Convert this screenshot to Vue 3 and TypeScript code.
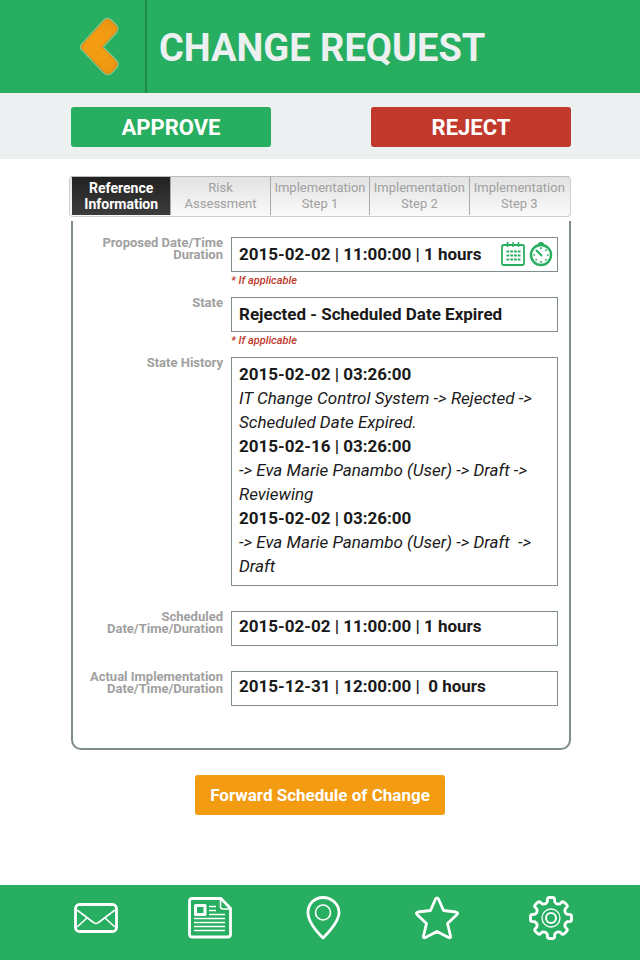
<script setup lang="ts">
import { ref } from 'vue'

interface HistoryEntry {
  date: string
  note: string
}

const tabs: [string, string][] = [
  ['Reference', 'Information'],
  ['Risk', 'Assessment'],
  ['Implementation', 'Step 1'],
  ['Implementation', 'Step 2'],
  ['Implementation', 'Step 3'],
]
const activeTab = ref(0)

const proposed = ref('2015-02-02 | 11:00:00 | 1 hours')
const state = ref('Rejected - Scheduled Date Expired')
const scheduled = ref('2015-02-02 | 11:00:00 | 1 hours')
const actual = ref('2015-12-31 | 12:00:00 |  0 hours')

const history: HistoryEntry[] = [
  { date: '2015-02-02 | 03:26:00', note: 'IT Change Control System -> Rejected ->\nScheduled Date Expired.' },
  { date: '2015-02-16 | 03:26:00', note: '-> Eva Marie Panambo (User) -> Draft ->\nReviewing' },
  { date: '2015-02-02 | 03:26:00', note: '-> Eva Marie Panambo (User) -> Draft  ->\nDraft' },
]

// Cog outline: eight flat-tipped teeth around the centre of a 44-unit box.
function cogPath(): string {
  const point = (radius: number, degrees: number): string => {
    const a = (degrees * Math.PI) / 180
    return `${(22 + radius * Math.sin(a)).toFixed(2)} ${(22 - radius * Math.cos(a)).toFixed(2)}`
  }
  let d = ''
  for (let i = 0; i < 8; i++) {
    const c = i * 45
    d += `${i ? 'L' : 'M'}${point(16.6, c - 13)}L${point(20, c - 10)}Q${point(20.6, c - 8)} ${point(20.6, c - 6)}`
    d += `L${point(20.6, c + 6)}Q${point(20.6, c + 8)} ${point(20, c + 10)}L${point(16.6, c + 13)}`
    d += `Q${point(14.2, c + 22.5)} ${point(16.6, c + 32)}`
  }
  return d + 'Z'
}
const cog = cogPath()
const dots = [0, 45, 90, 135, 180, 225, 270]
</script>

<template>
  <div class="page">
    <header class="header">
      <button class="back" type="button" aria-label="Back">
        <svg width="42" height="62" viewBox="0 0 44 64">
          <defs>
            <radialGradient id="amber" gradientUnits="userSpaceOnUse" cx="20" cy="32" r="32">
              <stop offset="0.4" stop-color="#f39c12" />
              <stop offset="1" stop-color="#ea9310" />
            </radialGradient>
          </defs>
          <path class="halo" d="M26.500 4.500Q30 1 34 5L38 9Q42 13 38 17L24 32L38 46Q42 50 38 54L34 58.500Q30 62 26 58L4 35Q1 32 4 29Z" />
          <path class="chevron" d="M26.500 4.500Q30 1 34 5L38 9Q42 13 38 17L24 32L38 46Q42 50 38 54L34 58.500Q30 62 26 58L4 35Q1 32 4 29Z" fill="url(#amber)" />
        </svg>
      </button>
      <h1>CHANGE REQUEST</h1>
    </header>

    <div class="decision">
      <button class="approve" type="button">APPROVE</button>
      <button class="reject" type="button">REJECT</button>
    </div>

    <main class="content">
      <div class="tabs" role="tablist">
        <button
          v-for="(tab, i) in tabs"
          :key="i"
          type="button"
          role="tab"
          :aria-selected="activeTab === i"
          :class="['tab', { active: activeTab === i }]"
          @click="activeTab = i"
        >
          {{ tab[0] }}<br />{{ tab[1] }}
        </button>
      </div>

      <form class="panel" @submit.prevent>
        <div class="row">
          <label for="proposed">Proposed Date/Time<br />Duration</label>
          <div class="field">
            <div class="box">
              <input id="proposed" v-model="proposed" type="text" />
              <button class="tool" type="button" aria-label="Pick date">
                <svg width="24" height="26" viewBox="0 0 24 26" fill="none" stroke="#27ae60">
                  <rect x="1" y="4" width="22" height="20" rx="1.500" stroke-width="1.800" />
                  <path d="M6.500 1v5M12 1v5M17.500 1v5" stroke-width="1.500" />
                  <path d="M5.500 10.500h14M5.500 14.500h14M5.500 18.500h14" stroke-width="2.200" stroke-dasharray="2.700 1.070" />
                </svg>
              </button>
              <button class="tool" type="button" aria-label="Pick duration">
                <svg width="24" height="26" viewBox="0 0 24 26" fill="none" stroke="#27ae60">
                  <circle cx="12" cy="14" r="10" stroke-width="2.400" />
                  <path d="M9 3.500L10.500 1.500h3L15 3.500z" fill="#27ae60" />
                  <path d="M7.500 9.500L12.500 14.500" stroke-width="2" stroke-linecap="round" />
                  <path v-for="d in dots" :key="d" d="M12 6.300v1.700" stroke-width="1.700" :transform="`rotate(${d} 12 14)`" />
                </svg>
              </button>
            </div>
            <small>* If applicable</small>
          </div>
        </div>

        <div class="row">
          <label for="state">State</label>
          <div class="field">
            <div class="box"><input id="state" v-model="state" type="text" /></div>
            <small>* If applicable</small>
          </div>
        </div>

        <div class="row">
          <span id="history-label" class="label">State History</span>
          <div class="field history" role="group" aria-labelledby="history-label">
            <template v-for="(entry, i) in history" :key="i">
              <strong>{{ entry.date }}</strong>
              <p>{{ entry.note }}</p>
            </template>
          </div>
        </div>

        <div class="row spaced">
          <label for="scheduled">Scheduled<br />Date/Time/Duration</label>
          <div class="field">
            <div class="box high"><input id="scheduled" v-model="scheduled" type="text" /></div>
          </div>
        </div>

        <div class="row spaced">
          <label for="actual">Actual Implementation<br />Date/Time/Duration</label>
          <div class="field">
            <div class="box high"><input id="actual" v-model="actual" type="text" /></div>
          </div>
        </div>
      </form>

      <button class="forward" type="button">Forward Schedule of Change</button>
    </main>

    <nav class="footer" aria-label="Main">
      <a href="#mail" aria-label="Mail">
        <svg width="44" height="44" viewBox="0 0 44 44">
          <rect x="1.500" y="8.500" width="41" height="27" rx="4" stroke-width="2.800" />
          <path d="M3 14L19.500 26.500Q22 28.500 24.500 26.500L41 14M3 31L13 22M41 31L31 22" stroke-width="1.600" />
        </svg>
      </a>
      <a href="#news" aria-label="News">
        <svg width="44" height="44" viewBox="0 0 44 44">
          <path d="M4 2.500H33L42.500 12.500V38.500Q42.500 41 39.500 41H4.500Q1.500 41 1.500 38.500V5.500Q1.500 2.500 4 2.500Z" stroke-width="2.800" />
          <path d="M32.500 3.500V10.500Q32.500 13 35 13H42" stroke-width="1.600" />
          <rect x="7.500" y="9.500" width="9.500" height="9" stroke-width="3" />
          <path d="M21 10.500H28M21 14.500H28M21 18.500H37M6 22.500H37M6 26.500H37M6 30.500H37M6 34.500H37" stroke-width="1.500" />
        </svg>
      </a>
      <a href="#places" aria-label="Places">
        <svg width="44" height="44" viewBox="0 0 44 44">
          <path d="M21 42C17 38 6 26 6 16.500C6 8 12.500 1.500 21 1.500S37 8 37 16.500C37 26 25 38 21 42Z" stroke-width="2.800" />
          <circle cx="21" cy="16.500" r="7.500" stroke-width="1.600" />
        </svg>
      </a>
      <a href="#favourites" aria-label="Favourites">
        <svg width="44" height="44" viewBox="0 0 44 44">
          <path d="M20.500 3Q22 1 23.500 3L28.500 14.500L41 16Q43.500 16.500 42 18.500L32.500 27.500L35.500 40Q36 42.500 33.500 41.500L22 35.500L10.500 41.500Q8 42.500 8.500 40L11.500 27.500L2 18.500Q.500 16.500 3 16L15.500 14.500Z" stroke-width="2.800" />
        </svg>
      </a>
      <a href="#settings" aria-label="Settings">
        <svg width="44" height="44" viewBox="0 0 44 44">
          <path :d="cog" stroke-width="2.800" />
          <circle cx="22" cy="22" r="9" stroke-width="1.300" />
          <circle cx="22" cy="22" r="5" stroke-width="2" />
        </svg>
      </a>
    </nav>
  </div>
</template>

<style>
body {
  margin: 0;
  background: #fff;
}
</style>

<style scoped>
.page {
  display: flex;
  flex-direction: column;
  min-height: 100vh;
  font-family: Roboto, 'Open Sans', sans-serif;
  color: #1a1a1a;
}

* {
  box-sizing: border-box;
}

button {
  border: 0;
  padding: 0;
  font: inherit;
  cursor: pointer;
}

.header {
  display: flex;
  height: 93px;
  background: #27ae60;
}

.back {
  display: flex;
  align-items: center;
  justify-content: flex-end;
  width: 147px;
  padding-right: 24px;
  background: none;
  border-right: 2px solid #1f8a4c;
}

.halo {
  fill: none;
  stroke: #8ed092;
  stroke-width: 3;
}

.chevron {
  stroke: #c87f16;
  stroke-width: 1;
}

h1 {
  margin: 0;
  padding-left: 12px;
  font-size: 38px;
  line-height: 96px;
  font-weight: 700;
  color: #ecf0f1;
  white-space: nowrap;
}

.decision {
  display: flex;
  justify-content: space-between;
  padding: 14px 69px 12px 71px;
  background: #ecf0f1;
}

.decision button {
  width: 200px;
  height: 40px;
  border-radius: 3px;
  font-size: 22px;
  font-weight: 700;
  color: #fff;
}

.decision .approve {
  background: #27ae60;
}

.decision .reject {
  background: #c0392b;
}

.content {
  flex: 1;
  display: flex;
  flex-direction: column;
  padding: 17px 69px 0;
}

.tabs {
  display: grid;
  grid-template-columns: repeat(5, 1fr);
  height: 41px;
  padding: 0 1px 1px 2px;
  border: 1px solid #cfcfcf;
  border-top-color: #bbb;
  border-radius: 4px;
  background: linear-gradient(#e2e2e2, #fafafa);
}

.tab {
  background: none;
  border-right: 1px solid #a9a9a9;
  font-size: 13px;
  line-height: 16px;
  color: #a0a0a0;
  white-space: nowrap;
}

.tab:last-child {
  border-right: 0;
}

.tab.active {
  background: linear-gradient(#222, #3c3c3c);
  color: #fff;
  font-size: 14px;
  font-weight: 700;
}

.panel {
  margin: 4px 0 0 2px;
  padding: 16px 11px 42px 9px;
  border: 2px solid #7f8c8d;
  border-top: 0;
  border-radius: 0 0 10px 10px;
}

.row {
  display: grid;
  grid-template-columns: 141px 1fr;
  column-gap: 8px;
}

.row.spaced {
  margin-top: 25px;
}

label,
.label {
  font-size: 13px;
  line-height: 12px;
  font-weight: 700;
  text-align: right;
  color: #a0a0a0;
  white-space: nowrap;
}

.field {
  min-width: 0;
}

.box {
  display: flex;
  align-items: center;
  gap: 4px;
  height: 35px;
  padding: 0 4px 2px 7px;
  border: 1px solid #7f8c8d;
}

.box.high {
  padding-bottom: 6px;
}

.box input {
  flex: 1;
  min-width: 0;
  padding: 0;
  border: 0;
  outline: 0;
  background: none;
  font: inherit;
  font-size: 17px;
  font-weight: 700;
  color: inherit;
}

.tool {
  display: flex;
  background: none;
}

small {
  display: block;
  height: 25px;
  font-size: 11px;
  line-height: 17px;
  font-style: italic;
  font-weight: 500;
  color: #c0392b;
}

.history {
  padding: 4px 7px 7px;
  border: 1px solid #7f8c8d;
  font-size: 17px;
  line-height: 24px;
  white-space: pre-wrap;
}

.history strong {
  display: block;
}

.history p {
  margin: 0;
  font-style: italic;
}

.forward {
  align-self: center;
  width: 250px;
  height: 40px;
  margin: 25px 0;
  border-radius: 3px;
  background: #f39c12;
  font-size: 17px;
  font-weight: 700;
  color: #fff;
}

.footer {
  display: flex;
  justify-content: space-between;
  height: 75px;
  padding: 11px 67px 0 74px;
  background: #27ae60;
}

.footer a {
  height: 44px;
}

.footer svg {
  display: block;
  fill: none;
  stroke: #fff;
  stroke-linejoin: round;
}
</style>
